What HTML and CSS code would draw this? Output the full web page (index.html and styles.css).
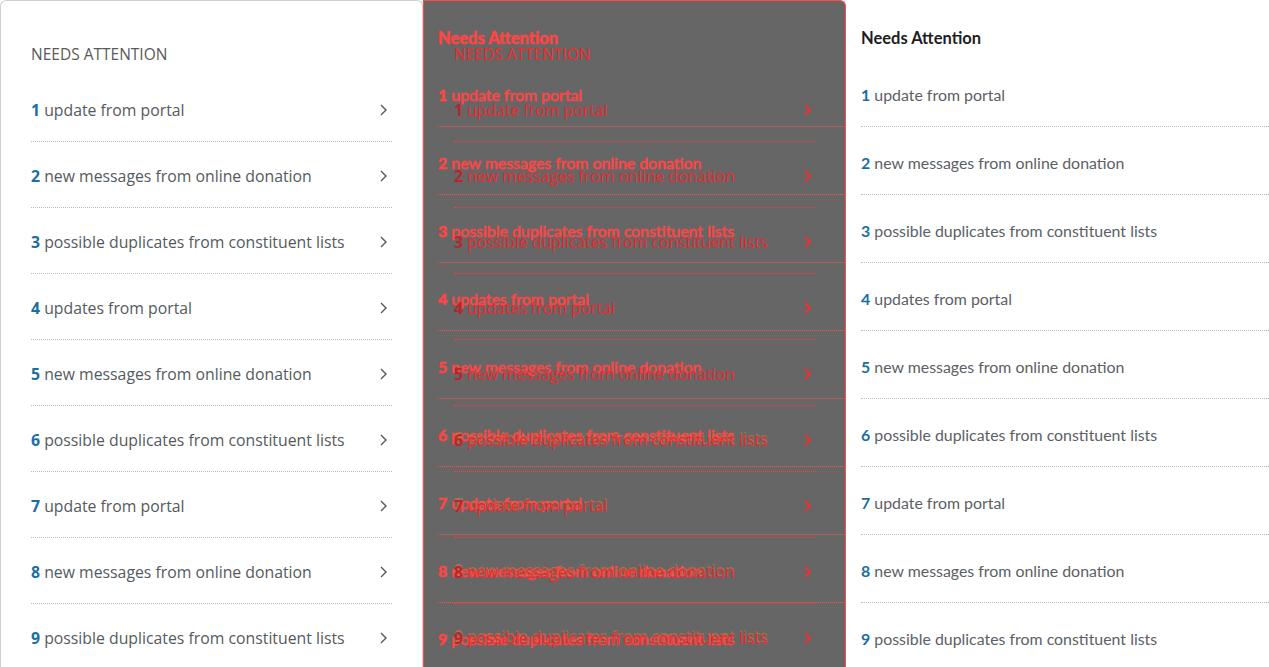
FILE: index.html
```html
<!DOCTYPE html>
<html lang="en">
<head>
<meta charset="utf-8">
<title>Needs Attention – visual diff</title>
<link rel="stylesheet" href="styles.css">
</head>
<body>
<div class="diff-view">
  <section class="panel panel-expected">
    <h2 class="exp-heading">Needs Attention</h2>
    <ul class="exp-list">
      <li class="exp-item"><span><b class="num">1</b> update from portal</span><svg class="chev" viewBox="0 0 8 12"><path d="M1.5 1.5 L6 6 L1.5 10.5"/></svg></li>
      <li class="exp-item"><span><b class="num">2</b> new messages from online donation</span><svg class="chev" viewBox="0 0 8 12"><path d="M1.5 1.5 L6 6 L1.5 10.5"/></svg></li>
      <li class="exp-item"><span><b class="num">3</b> possible duplicates from constituent lists</span><svg class="chev" viewBox="0 0 8 12"><path d="M1.5 1.5 L6 6 L1.5 10.5"/></svg></li>
      <li class="exp-item"><span><b class="num">4</b> updates from portal</span><svg class="chev" viewBox="0 0 8 12"><path d="M1.5 1.5 L6 6 L1.5 10.5"/></svg></li>
      <li class="exp-item"><span><b class="num">5</b> new messages from online donation</span><svg class="chev" viewBox="0 0 8 12"><path d="M1.5 1.5 L6 6 L1.5 10.5"/></svg></li>
      <li class="exp-item"><span><b class="num">6</b> possible duplicates from constituent lists</span><svg class="chev" viewBox="0 0 8 12"><path d="M1.5 1.5 L6 6 L1.5 10.5"/></svg></li>
      <li class="exp-item"><span><b class="num">7</b> update from portal</span><svg class="chev" viewBox="0 0 8 12"><path d="M1.5 1.5 L6 6 L1.5 10.5"/></svg></li>
      <li class="exp-item"><span><b class="num">8</b> new messages from online donation</span><svg class="chev" viewBox="0 0 8 12"><path d="M1.5 1.5 L6 6 L1.5 10.5"/></svg></li>
      <li class="exp-item"><span><b class="num">9</b> possible duplicates from constituent lists</span><svg class="chev" viewBox="0 0 8 12"><path d="M1.5 1.5 L6 6 L1.5 10.5"/></svg></li>
    </ul>
  </section>

  <section class="panel panel-diff">
    <div class="layer layer-actual">
      <h2 class="act-heading">Needs Attention</h2>
      <ul class="act-list">
        <li class="act-item"><b class="num">1</b> update from portal</li>
        <li class="act-item"><b class="num">2</b> new messages from online donation</li>
        <li class="act-item"><b class="num">3</b> possible duplicates from constituent lists</li>
        <li class="act-item"><b class="num">4</b> updates from portal</li>
        <li class="act-item"><b class="num">5</b> new messages from online donation</li>
        <li class="act-item"><b class="num">6</b> possible duplicates from constituent lists</li>
        <li class="act-item"><b class="num">7</b> update from portal</li>
        <li class="act-item"><b class="num">8</b> new messages from online donation</li>
        <li class="act-item"><b class="num">9</b> possible duplicates from constituent lists</li>
      </ul>
    </div>
    <div class="layer layer-expected">
      <h2 class="exp-heading">Needs Attention</h2>
      <ul class="exp-list">
        <li class="exp-item"><span><b class="num">1</b> update from portal</span><svg class="chev" viewBox="0 0 8 12"><path d="M1.5 1.5 L6 6 L1.5 10.5"/></svg></li>
        <li class="exp-item"><span><b class="num">2</b> new messages from online donation</span><svg class="chev" viewBox="0 0 8 12"><path d="M1.5 1.5 L6 6 L1.5 10.5"/></svg></li>
        <li class="exp-item"><span><b class="num">3</b> possible duplicates from constituent lists</span><svg class="chev" viewBox="0 0 8 12"><path d="M1.5 1.5 L6 6 L1.5 10.5"/></svg></li>
        <li class="exp-item"><span><b class="num">4</b> updates from portal</span><svg class="chev" viewBox="0 0 8 12"><path d="M1.5 1.5 L6 6 L1.5 10.5"/></svg></li>
        <li class="exp-item"><span><b class="num">5</b> new messages from online donation</span><svg class="chev" viewBox="0 0 8 12"><path d="M1.5 1.5 L6 6 L1.5 10.5"/></svg></li>
        <li class="exp-item overlap"><span><b class="num">6</b> possible duplicates from constituent lists</span><svg class="chev" viewBox="0 0 8 12"><path d="M1.5 1.5 L6 6 L1.5 10.5"/></svg></li>
        <li class="exp-item overlap"><span><b class="num">7</b> update from portal</span><svg class="chev" viewBox="0 0 8 12"><path d="M1.5 1.5 L6 6 L1.5 10.5"/></svg></li>
        <li class="exp-item overlap"><span><b class="num">8</b> new messages from online donation</span><svg class="chev" viewBox="0 0 8 12"><path d="M1.5 1.5 L6 6 L1.5 10.5"/></svg></li>
        <li class="exp-item overlap"><span><b class="num">9</b> possible duplicates from constituent lists</span><svg class="chev" viewBox="0 0 8 12"><path d="M1.5 1.5 L6 6 L1.5 10.5"/></svg></li>
      </ul>
    </div>
  </section>

  <section class="panel panel-actual">
    <h2 class="act-heading">Needs Attention</h2>
    <ul class="act-list">
      <li class="act-item"><b class="num">1</b> update from portal</li>
      <li class="act-item"><b class="num">2</b> new messages from online donation</li>
      <li class="act-item"><b class="num">3</b> possible duplicates from constituent lists</li>
      <li class="act-item"><b class="num">4</b> updates from portal</li>
      <li class="act-item"><b class="num">5</b> new messages from online donation</li>
      <li class="act-item"><b class="num">6</b> possible duplicates from constituent lists</li>
      <li class="act-item"><b class="num">7</b> update from portal</li>
      <li class="act-item"><b class="num">8</b> new messages from online donation</li>
      <li class="act-item"><b class="num">9</b> possible duplicates from constituent lists</li>
    </ul>
  </section>
</div>
</body>
</html>
```

FILE: styles.css
```css
* { box-sizing: border-box; }

html, body {
  margin: 0;
  padding: 0;
  background: #ffffff;
}

.diff-view {
  display: flex;
  width: 1269px;
  height: 667px;
  overflow: hidden;
}

.panel {
  flex: 0 0 423px;
  width: 423px;
  height: 667px;
  overflow: hidden;
}

ul {
  list-style: none;
  margin: 0;
  padding: 0;
}

h2 {
  margin: 0;
  font-weight: normal;
}

/* ---------- expected (left) ---------- */
.panel-expected {
  border: 1px solid #cfcfcf;
  border-bottom: none;
  border-radius: 6px 6px 0 0;
  padding: 43px 30px 0 30px;
  background: #fff;
}

.exp-heading {
  font-family: "Open Sans", "Liberation Sans", sans-serif;
  font-size: 15.5px;
  line-height: 20px;
  text-transform: uppercase;
  color: #595959;
  margin-bottom: 12px;
  white-space: nowrap;
}

.exp-item {
  display: flex;
  justify-content: space-between;
  align-items: center;
  padding: 24px 4px 21px 0;
  border-bottom: 1px dotted #b9b9b9;
  font-family: "Open Sans", "Liberation Sans", sans-serif;
  font-size: 15.8px;
  line-height: 20px;
  color: #555a60;
  white-space: nowrap;
}

.exp-item .num {
  font-weight: 700;
  color: #1a6fa0;
}

.chev {
  width: 8px;
  height: 12px;
  flex: 0 0 8px;
  fill: none;
  stroke: #505a66;
  stroke-width: 1.4;
  stroke-linecap: square;
}

/* ---------- actual (right) ---------- */
.panel-actual {
  padding: 28px 0 0 15px;
  background: #fff;
}

.act-heading {
  font-family: "Lato", "Open Sans", sans-serif;
  font-size: 16.5px;
  line-height: 20px;
  font-weight: 700;
  color: #1e1e1e;
  margin-bottom: 11px;
  white-space: nowrap;
}

.act-item {
  padding: 26px 0 21px 0;
  border-bottom: 1px dotted #bdbdbd;
  font-family: "Lato", "Open Sans", sans-serif;
  font-size: 15.9px;
  line-height: 20px;
  color: #5c6066;
  white-space: nowrap;
}

.act-item .num {
  font-weight: 700;
  color: #1a6fa0;
}

/* ---------- diff (middle) ---------- */
.panel-diff {
  position: relative;
  background: #666666;
  border: 1px solid #ff4a4a;
  border-bottom: none;
  border-radius: 0 6px 0 0;
}

.layer {
  position: absolute;
  top: 0;
  left: 0;
  right: 0;
  bottom: 0;
}

.layer-actual {
  padding: 27px 0 0 14px;
}

.layer-expected {
  padding: 43px 30px 0 30px;
  right: -1px;
}

.panel-diff .act-heading {
  color: #ff4545;
  -webkit-text-stroke: 0.6px #ff4545;
}

.panel-diff .act-item {
  color: #ff4545;
  -webkit-text-stroke: 0.6px #ff4545;
  border-bottom-color: #ff4a4a;
}

.panel-diff .act-item .num {
  color: #ff4545;
}

.panel-diff .exp-heading {
  color: #f02a2a;
}

.panel-diff .exp-item {
  color: #ea2a2e;
  border-bottom: 1px dotted #ff3a3a;
}

.panel-diff .exp-item .num {
  color: #b8262a;
}

.panel-diff .exp-item.overlap span {
  text-shadow: 0 -2px 0 rgba(210, 130, 60, 0.55);
}

.panel-diff .chev {
  stroke: #ff2a2a;
  stroke-width: 1.8;
}
```
